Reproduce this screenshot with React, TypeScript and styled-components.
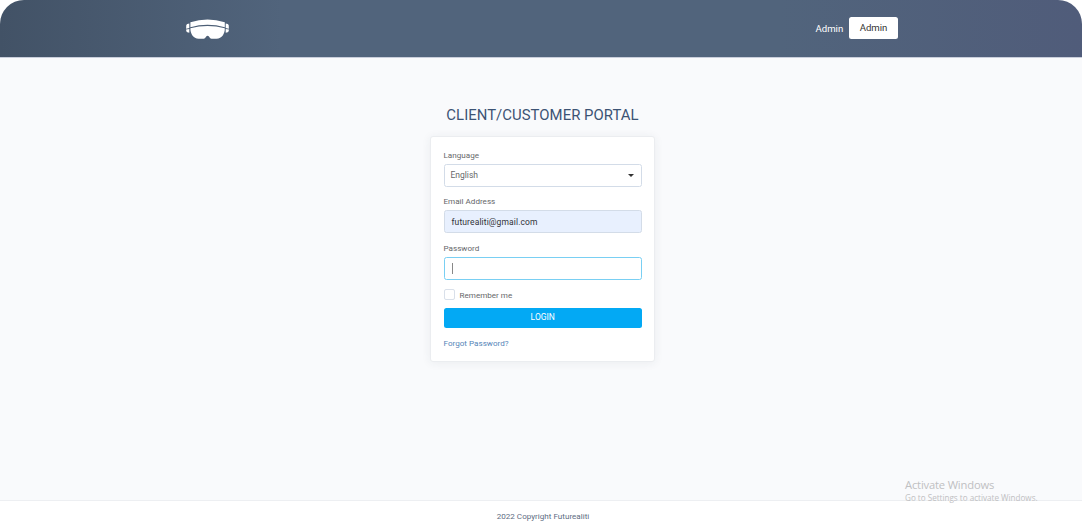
import React from "react";
import styled, { createGlobalStyle } from "styled-components";

const GlobalStyle = createGlobalStyle`
  * { box-sizing: border-box; }
  body { margin: 0; background: #fff; font-family: Roboto, "Liberation Sans", sans-serif; }
`;

const Page = styled.div`
  display: flex;
  flex-direction: column;
  height: 526px;
  position: relative;
  overflow: hidden;
  border-radius: 24px 24px 0 0;
  background: #f9fafc;
`;

const Header = styled.header`
  display: flex;
  justify-content: space-between;
  height: 58px;
  flex: none;
  padding: 0 184px 0 186px;
  background: linear-gradient(90deg, #425266 0%, #51647c 26%, #51647c 72%, #505c7a 100%);
  border-bottom: 1px solid #c9cedb;
`;

const Logo = styled.svg`
  margin-top: 19px;
  width: 43px;
  height: 21px;
`;

const Nav = styled.nav`
  display: flex;
  align-items: flex-start;
  padding-top: 17px;
  gap: 6px;
`;

const NavLink = styled.a`
  width: 27.5px;
  margin-top: 1px;
  color: #fff;
  font-size: 9.6px;
  line-height: 22px;
  white-space: nowrap;
`;

const NavButton = styled.button`
  width: 49px;
  height: 21.5px;
  padding: 0;
  border: 0;
  border-radius: 2.5px;
  background: #fff;
  color: #333;
  font: 9.6px/22px Roboto, sans-serif;
`;

const Main = styled.main`
  flex: 1;
  display: flex;
  flex-direction: column;
  align-items: center;
  padding: 47px 0 0 3px;
`;

const Title = styled.h1`
  margin: 0 0 11px;
  color: #3c5374;
  font-size: 14.9px;
  font-weight: 400;
  line-height: 20px;
  letter-spacing: 0.04px;
  white-space: nowrap;
`;

const Card = styled.form`
  width: 225px;
  height: 226px;
  padding: 14px 12px 0 12.5px;
  display: flex;
  flex-direction: column;
  background: #fff;
  border: 1px solid #ebedf0;
  border-radius: 3px;
  box-shadow: 0 1px 10px rgba(40, 55, 71, 0.07);
`;

const Label = styled.label`
  height: 14px;
  margin-top: -1px;
  color: #66676a;
  font-size: 8.1px;
  line-height: 10px;
`;

const Field = styled.div<{ $tone?: "filled" | "focus" }>`
  display: flex;
  align-items: center;
  justify-content: space-between;
  height: 23px;
  margin-bottom: 10.4px;
  padding: 0 7px ${(p) => (p.$tone ? 0 : 1)}px ${(p) => (p.$tone ? 7 : 6)}px;
  border: 1px solid ${(p) => (p.$tone === "focus" ? "#79cff3" : "#d3dce8")};
  border-radius: 2.5px;
  background: ${(p) => (p.$tone === "filled" ? "#e8f0fe" : "#fff")};
  color: ${(p) => (p.$tone === "filled" ? "#303238" : "#66676a")};
  font-size: 8.5px;
  letter-spacing: ${(p) => (p.$tone ? 0.12 : 0)}px;
`;

const Arrow = styled.span`
  border: 3px solid transparent;
  border-top-color: #333;
  border-bottom: 0;
`;

const Cursor = styled.span`
  width: 1px;
  height: 11px;
  background: #888;
`;

const Remember = styled.label`
  display: flex;
  align-items: center;
  gap: 5px;
  height: 11px;
  margin-top: -1px;
  color: #66676a;
  font-size: 8.1px;
  line-height: 10px;
`;

const Box = styled.span`
  width: 11px;
  height: 11px;
  border: 1px solid #d9e0ea;
  border-radius: 2px;
`;

const Login = styled.button`
  height: 20.5px;
  margin-top: 7.8px;
  padding: 0 0 1px;
  flex: none;
  border: 0;
  border-radius: 2.5px;
  background: #03a9f4;
  color: #fff;
  font: 8.5px/19px Roboto, sans-serif;
`;

const Forgot = styled.a`
  margin-top: 9px;
  color: #5685b8;
  font-size: 8.1px;
  line-height: 12px;
`;

const Footer = styled.footer`
  height: 26px;
  flex: none;
  padding: 9px 0 0 4px;
  border-top: 1px solid #edeff2;
  background: #fff;
  color: #5e6d83;
  text-align: center;
  font-size: 8.1px;
  line-height: 12px;
`;

const Watermark = styled.div`
  position: absolute;
  left: 905px;
  top: 477px;
  color: #bfc0c2;
  font-family: "Open Sans", sans-serif;
  white-space: nowrap;
`;

const WatermarkTitle = styled.div`
  font-size: 11.2px;
  line-height: 15px;
  letter-spacing: -0.17px;
`;

const WatermarkText = styled.div`
  font-size: 8.1px;
  line-height: 11px;
`;

export default function App() {
  return (
    <>
      <GlobalStyle />
      <Page>
        <Header>
          <Logo viewBox="0 0 43 21" fill="#fff">
            <path d="M4.4 3.2Q21.5-2 38.8 3.2V8.2Q21.5 3.3 4.4 8.2Z" />
            <path d="M4.4 9.3Q21.5 4.7 38.8 9.3C39 14.5 36 19.7 30.5 19.7H25.5C23.4 19.7 23.5 16.7 21.6 16.7S19.8 19.7 17.7 19.7H12.7C7.2 19.7 4.2 14.5 4.4 9.3Z" />
            <path d="M0.3 6Q0.7 4.6 3.3 4.5V9L0.1 9.7ZM0.1 10.6L3.3 9.9V13.8Q0.7 13.3 0.3 12.3ZM42.7 6Q42.3 4.6 39.7 4.5V9L42.9 9.7ZM42.9 10.6L39.7 9.9V13.8Q42.3 13.3 42.7 12.3Z" />
          </Logo>
          <Nav>
            <NavLink>Admin</NavLink>
            <NavButton>Admin</NavButton>
          </Nav>
        </Header>
        <Main>
          <Title>CLIENT/CUSTOMER PORTAL</Title>
          <Card>
            <Label>Language</Label>
            <Field>
              English
              <Arrow />
            </Field>
            <Label>Email Address</Label>
            <Field $tone="filled">futurealiti@gmail.com</Field>
            <Label>Password</Label>
            <Field $tone="focus">
              <Cursor />
            </Field>
            <Remember>
              <Box />
              Remember me
            </Remember>
            <Login type="button">LOGIN</Login>
            <Forgot>Forgot Password?</Forgot>
          </Card>
        </Main>
        <Footer>2022 Copyright Futurealiti</Footer>
        <Watermark>
          <WatermarkTitle>Activate Windows</WatermarkTitle>
          <WatermarkText>Go to Settings to activate Windows.</WatermarkText>
        </Watermark>
      </Page>
    </>
  );
}
